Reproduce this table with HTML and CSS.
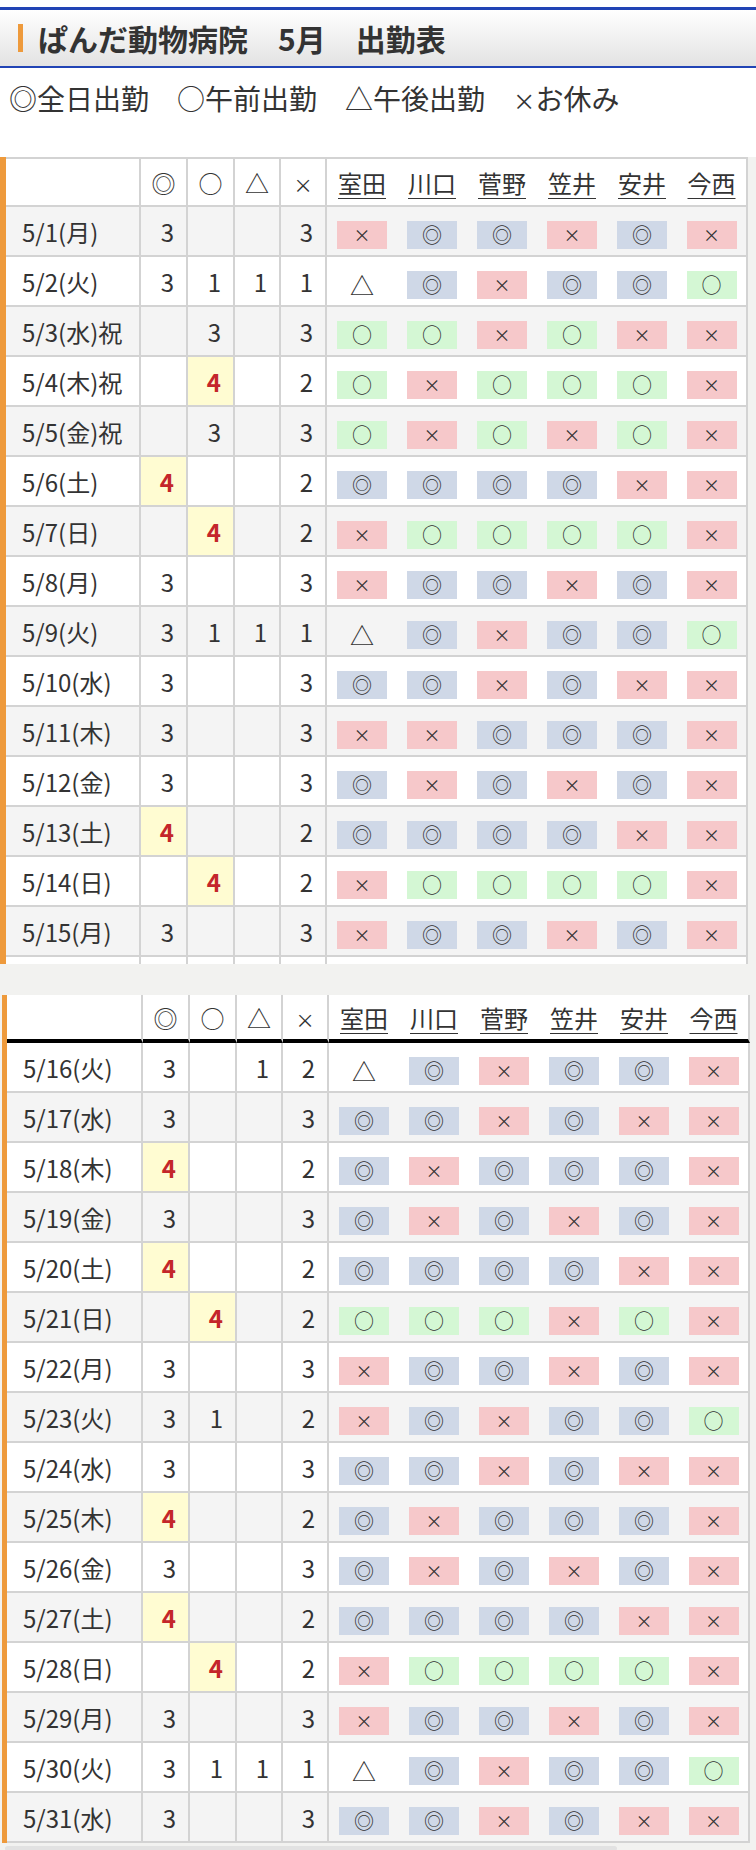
FILE: index.html
```html
<!DOCTYPE html>
<html lang="ja">
<head>
    <meta charset="UTF-8">
    <meta name="viewport" content="width=device-width, initial-scale=1.0">
    <title>ぱんだ動物病院 5月 出勤表</title>
    <link rel="stylesheet" href="styles.css">
</head>
<body>
    <div class="top">
        <div class="title-bar">
            <span class="title-mark"></span>
            <h1>ぱんだ動物病院　5月　出勤表</h1>
        </div>
        <p class="legend">◎全日出勤　○午前出勤　△午後出勤　<span class="small-x">×</span>お休み</p>
    </div>

    <!-- 前半 -->
    <div class="sheet">
        <table class="grid">
            <colgroup>
                <col class="c-date"><col class="c-num"><col class="c-num"><col class="c-num2"><col class="c-num2">
                <col class="c-name"><col class="c-name"><col class="c-name"><col class="c-name"><col class="c-name"><col class="c-last">
            </colgroup>
            <thead>
                <tr>
                    <th class="d"></th><th class="n">◎</th><th class="n">○</th><th class="n">△</th><th class="n"><span class="small-x">×</span></th>
                    <th><span class="who">室田</span></th><th><span class="who">川口</span></th><th><span class="who">菅野</span></th>
                    <th><span class="who">笠井</span></th><th><span class="who">安井</span></th><th><span class="who">今西</span></th>
                </tr>
            </thead>
            <tbody>
                <tr class="odd"><td class="d">5/1(月)</td><td class="n">3</td><td class="n"></td><td class="n"></td><td class="n">3</td>
                    <td><span class="mk x">×</span></td><td><span class="mk w">◎</span></td><td><span class="mk w">◎</span></td><td><span class="mk x">×</span></td><td><span class="mk w">◎</span></td><td><span class="mk x">×</span></td></tr>
                <tr><td class="d">5/2(火)</td><td class="n">3</td><td class="n">1</td><td class="n">1</td><td class="n">1</td>
                    <td><span class="mk p">△</span></td><td><span class="mk w">◎</span></td><td><span class="mk x">×</span></td><td><span class="mk w">◎</span></td><td><span class="mk w">◎</span></td><td><span class="mk a">○</span></td></tr>
                <tr class="odd"><td class="d">5/3(水)祝</td><td class="n"></td><td class="n">3</td><td class="n"></td><td class="n">3</td>
                    <td><span class="mk a">○</span></td><td><span class="mk a">○</span></td><td><span class="mk x">×</span></td><td><span class="mk a">○</span></td><td><span class="mk x">×</span></td><td><span class="mk x">×</span></td></tr>
                <tr><td class="d">5/4(木)祝</td><td class="n"></td><td class="n hi">4</td><td class="n"></td><td class="n">2</td>
                    <td><span class="mk a">○</span></td><td><span class="mk x">×</span></td><td><span class="mk a">○</span></td><td><span class="mk a">○</span></td><td><span class="mk a">○</span></td><td><span class="mk x">×</span></td></tr>
                <tr class="odd"><td class="d">5/5(金)祝</td><td class="n"></td><td class="n">3</td><td class="n"></td><td class="n">3</td>
                    <td><span class="mk a">○</span></td><td><span class="mk x">×</span></td><td><span class="mk a">○</span></td><td><span class="mk x">×</span></td><td><span class="mk a">○</span></td><td><span class="mk x">×</span></td></tr>
                <tr><td class="d">5/6(土)</td><td class="n hi">4</td><td class="n"></td><td class="n"></td><td class="n">2</td>
                    <td><span class="mk w">◎</span></td><td><span class="mk w">◎</span></td><td><span class="mk w">◎</span></td><td><span class="mk w">◎</span></td><td><span class="mk x">×</span></td><td><span class="mk x">×</span></td></tr>
                <tr class="odd"><td class="d">5/7(日)</td><td class="n"></td><td class="n hi">4</td><td class="n"></td><td class="n">2</td>
                    <td><span class="mk x">×</span></td><td><span class="mk a">○</span></td><td><span class="mk a">○</span></td><td><span class="mk a">○</span></td><td><span class="mk a">○</span></td><td><span class="mk x">×</span></td></tr>
                <tr><td class="d">5/8(月)</td><td class="n">3</td><td class="n"></td><td class="n"></td><td class="n">3</td>
                    <td><span class="mk x">×</span></td><td><span class="mk w">◎</span></td><td><span class="mk w">◎</span></td><td><span class="mk x">×</span></td><td><span class="mk w">◎</span></td><td><span class="mk x">×</span></td></tr>
                <tr class="odd"><td class="d">5/9(火)</td><td class="n">3</td><td class="n">1</td><td class="n">1</td><td class="n">1</td>
                    <td><span class="mk p">△</span></td><td><span class="mk w">◎</span></td><td><span class="mk x">×</span></td><td><span class="mk w">◎</span></td><td><span class="mk w">◎</span></td><td><span class="mk a">○</span></td></tr>
                <tr><td class="d">5/10(水)</td><td class="n">3</td><td class="n"></td><td class="n"></td><td class="n">3</td>
                    <td><span class="mk w">◎</span></td><td><span class="mk w">◎</span></td><td><span class="mk x">×</span></td><td><span class="mk w">◎</span></td><td><span class="mk x">×</span></td><td><span class="mk x">×</span></td></tr>
                <tr class="odd"><td class="d">5/11(木)</td><td class="n">3</td><td class="n"></td><td class="n"></td><td class="n">3</td>
                    <td><span class="mk x">×</span></td><td><span class="mk x">×</span></td><td><span class="mk w">◎</span></td><td><span class="mk w">◎</span></td><td><span class="mk w">◎</span></td><td><span class="mk x">×</span></td></tr>
                <tr><td class="d">5/12(金)</td><td class="n">3</td><td class="n"></td><td class="n"></td><td class="n">3</td>
                    <td><span class="mk w">◎</span></td><td><span class="mk x">×</span></td><td><span class="mk w">◎</span></td><td><span class="mk x">×</span></td><td><span class="mk w">◎</span></td><td><span class="mk x">×</span></td></tr>
                <tr class="odd"><td class="d">5/13(土)</td><td class="n hi">4</td><td class="n"></td><td class="n"></td><td class="n">2</td>
                    <td><span class="mk w">◎</span></td><td><span class="mk w">◎</span></td><td><span class="mk w">◎</span></td><td><span class="mk w">◎</span></td><td><span class="mk x">×</span></td><td><span class="mk x">×</span></td></tr>
                <tr><td class="d">5/14(日)</td><td class="n"></td><td class="n hi">4</td><td class="n"></td><td class="n">2</td>
                    <td><span class="mk x">×</span></td><td><span class="mk a">○</span></td><td><span class="mk a">○</span></td><td><span class="mk a">○</span></td><td><span class="mk a">○</span></td><td><span class="mk x">×</span></td></tr>
                <tr class="odd"><td class="d">5/15(月)</td><td class="n">3</td><td class="n"></td><td class="n"></td><td class="n">3</td>
                    <td><span class="mk x">×</span></td><td><span class="mk w">◎</span></td><td><span class="mk w">◎</span></td><td><span class="mk x">×</span></td><td><span class="mk w">◎</span></td><td><span class="mk x">×</span></td></tr>
                <!-- スクロールで切れている行 -->
                <tr><td class="d"></td><td class="n"></td><td class="n"></td><td class="n"></td><td class="n"></td>
                    <td></td><td></td><td></td><td></td><td></td><td></td></tr>
            </tbody>
        </table>
    </div>

    <!-- 後半（見出し固定） -->
    <div class="sheet second">
        <table class="grid">
            <colgroup>
                <col class="c-date2"><col class="c-num"><col class="c-num"><col class="c-num2"><col class="c-num2">
                <col class="c-name"><col class="c-name"><col class="c-name"><col class="c-name"><col class="c-name"><col class="c-last">
            </colgroup>
            <thead>
                <tr>
                    <th class="d"></th><th class="n">◎</th><th class="n">○</th><th class="n">△</th><th class="n"><span class="small-x">×</span></th>
                    <th><span class="who">室田</span></th><th><span class="who">川口</span></th><th><span class="who">菅野</span></th>
                    <th><span class="who">笠井</span></th><th><span class="who">安井</span></th><th><span class="who">今西</span></th>
                </tr>
            </thead>
            <tbody>
                <tr><td class="d">5/16(火)</td><td class="n">3</td><td class="n"></td><td class="n">1</td><td class="n">2</td>
                    <td><span class="mk p">△</span></td><td><span class="mk w">◎</span></td><td><span class="mk x">×</span></td><td><span class="mk w">◎</span></td><td><span class="mk w">◎</span></td><td><span class="mk x">×</span></td></tr>
                <tr class="odd"><td class="d">5/17(水)</td><td class="n">3</td><td class="n"></td><td class="n"></td><td class="n">3</td>
                    <td><span class="mk w">◎</span></td><td><span class="mk w">◎</span></td><td><span class="mk x">×</span></td><td><span class="mk w">◎</span></td><td><span class="mk x">×</span></td><td><span class="mk x">×</span></td></tr>
                <tr><td class="d">5/18(木)</td><td class="n hi">4</td><td class="n"></td><td class="n"></td><td class="n">2</td>
                    <td><span class="mk w">◎</span></td><td><span class="mk x">×</span></td><td><span class="mk w">◎</span></td><td><span class="mk w">◎</span></td><td><span class="mk w">◎</span></td><td><span class="mk x">×</span></td></tr>
                <tr class="odd"><td class="d">5/19(金)</td><td class="n">3</td><td class="n"></td><td class="n"></td><td class="n">3</td>
                    <td><span class="mk w">◎</span></td><td><span class="mk x">×</span></td><td><span class="mk w">◎</span></td><td><span class="mk x">×</span></td><td><span class="mk w">◎</span></td><td><span class="mk x">×</span></td></tr>
                <tr><td class="d">5/20(土)</td><td class="n hi">4</td><td class="n"></td><td class="n"></td><td class="n">2</td>
                    <td><span class="mk w">◎</span></td><td><span class="mk w">◎</span></td><td><span class="mk w">◎</span></td><td><span class="mk w">◎</span></td><td><span class="mk x">×</span></td><td><span class="mk x">×</span></td></tr>
                <tr class="odd"><td class="d">5/21(日)</td><td class="n"></td><td class="n hi">4</td><td class="n"></td><td class="n">2</td>
                    <td><span class="mk a">○</span></td><td><span class="mk a">○</span></td><td><span class="mk a">○</span></td><td><span class="mk x">×</span></td><td><span class="mk a">○</span></td><td><span class="mk x">×</span></td></tr>
                <tr><td class="d">5/22(月)</td><td class="n">3</td><td class="n"></td><td class="n"></td><td class="n">3</td>
                    <td><span class="mk x">×</span></td><td><span class="mk w">◎</span></td><td><span class="mk w">◎</span></td><td><span class="mk x">×</span></td><td><span class="mk w">◎</span></td><td><span class="mk x">×</span></td></tr>
                <tr class="odd"><td class="d">5/23(火)</td><td class="n">3</td><td class="n">1</td><td class="n"></td><td class="n">2</td>
                    <td><span class="mk x">×</span></td><td><span class="mk w">◎</span></td><td><span class="mk x">×</span></td><td><span class="mk w">◎</span></td><td><span class="mk w">◎</span></td><td><span class="mk a">○</span></td></tr>
                <tr><td class="d">5/24(水)</td><td class="n">3</td><td class="n"></td><td class="n"></td><td class="n">3</td>
                    <td><span class="mk w">◎</span></td><td><span class="mk w">◎</span></td><td><span class="mk x">×</span></td><td><span class="mk w">◎</span></td><td><span class="mk x">×</span></td><td><span class="mk x">×</span></td></tr>
                <tr class="odd"><td class="d">5/25(木)</td><td class="n hi">4</td><td class="n"></td><td class="n"></td><td class="n">2</td>
                    <td><span class="mk w">◎</span></td><td><span class="mk x">×</span></td><td><span class="mk w">◎</span></td><td><span class="mk w">◎</span></td><td><span class="mk w">◎</span></td><td><span class="mk x">×</span></td></tr>
                <tr><td class="d">5/26(金)</td><td class="n">3</td><td class="n"></td><td class="n"></td><td class="n">3</td>
                    <td><span class="mk w">◎</span></td><td><span class="mk x">×</span></td><td><span class="mk w">◎</span></td><td><span class="mk x">×</span></td><td><span class="mk w">◎</span></td><td><span class="mk x">×</span></td></tr>
                <tr class="odd"><td class="d">5/27(土)</td><td class="n hi">4</td><td class="n"></td><td class="n"></td><td class="n">2</td>
                    <td><span class="mk w">◎</span></td><td><span class="mk w">◎</span></td><td><span class="mk w">◎</span></td><td><span class="mk w">◎</span></td><td><span class="mk x">×</span></td><td><span class="mk x">×</span></td></tr>
                <tr><td class="d">5/28(日)</td><td class="n"></td><td class="n hi">4</td><td class="n"></td><td class="n">2</td>
                    <td><span class="mk x">×</span></td><td><span class="mk a">○</span></td><td><span class="mk a">○</span></td><td><span class="mk a">○</span></td><td><span class="mk a">○</span></td><td><span class="mk x">×</span></td></tr>
                <tr class="odd"><td class="d">5/29(月)</td><td class="n">3</td><td class="n"></td><td class="n"></td><td class="n">3</td>
                    <td><span class="mk x">×</span></td><td><span class="mk w">◎</span></td><td><span class="mk w">◎</span></td><td><span class="mk x">×</span></td><td><span class="mk w">◎</span></td><td><span class="mk x">×</span></td></tr>
                <tr><td class="d">5/30(火)</td><td class="n">3</td><td class="n">1</td><td class="n">1</td><td class="n">1</td>
                    <td><span class="mk p">△</span></td><td><span class="mk w">◎</span></td><td><span class="mk x">×</span></td><td><span class="mk w">◎</span></td><td><span class="mk w">◎</span></td><td><span class="mk a">○</span></td></tr>
                <tr class="odd"><td class="d">5/31(水)</td><td class="n">3</td><td class="n"></td><td class="n"></td><td class="n">3</td>
                    <td><span class="mk w">◎</span></td><td><span class="mk w">◎</span></td><td><span class="mk x">×</span></td><td><span class="mk w">◎</span></td><td><span class="mk x">×</span></td><td><span class="mk x">×</span></td></tr>
            </tbody>
        </table>
    </div>
    <div class="scroll-thumb"></div>
</body>
</html>
```

FILE: styles.css
```css
* {
    box-sizing: border-box;
}
body {
    margin: 0;
    background-color: #f2f2f0;
    color: #333;
    font-family: "Noto Sans CJK JP", "Noto Sans", sans-serif;
}
.top {
    background: #fff;
    padding-top: 7px;
    padding-bottom: 37px;
}
.title-bar {
    display: flex;
    align-items: center;
    height: 61px;
    padding-left: 18px;
    border-top: 3px solid #2144b5;
    border-bottom: 2px solid #2144b5;
    background: linear-gradient(#fff, #e3e3e3);
}
.title-mark {
    width: 5px;
    height: 28px;
    margin-right: 15px;
    background-color: #ee9a3c;
}
h1 {
    margin: 0;
    font-size: 30px;
    font-weight: bold;
    color: #333;
    line-height: 1;
}
.legend {
    margin: 10px 0 0;
    padding-left: 9px;
    font-size: 28px;
    line-height: 40px;
}
.small-x {
    font-size: 0.8em;
}

/* 表 */
.sheet {
    width: 748px;
    height: 807px;
    overflow: hidden;
    background: #fff;
    border-left: 6px solid #ee9a3c;
}
.sheet.second {
    width: 748px;
    height: auto;
    margin: 31px 0 0 2px;
    border-left-width: 5px;
}
.grid {
    width: 742px;
    border-collapse: separate;
    border-spacing: 0;
    table-layout: fixed;
    font-size: 24px;
}
.second .grid {
    width: 743px;
}
.c-date { width: 135px; }
.c-date2 { width: 136px; }
.c-num { width: 47px; }
.c-num2 { width: 46px; }
.c-name { width: 70px; }
.c-last { width: 71px; }

.grid th,
.grid td {
    height: 50px;
    padding: 0;
    text-align: center;
    font-weight: normal;
    border-bottom: 2px solid #d3d3d3;
}
.grid thead th {
    border-top: 2px solid #d3d3d3;
}
.grid .d,
.grid .n,
.grid th:last-child,
.grid td:last-child {
    border-right: 2px solid #d3d3d3;
}
.second .grid thead th {
    height: 48px;
    border-top: none;
    border-bottom: 4px solid #000;
}
.grid td.d {
    text-align: left;
    padding-left: 16px;
    white-space: nowrap;
}
.grid td.n {
    text-align: right;
    padding-right: 12px;
}
.grid tr.odd td {
    background-color: #f4f4f4;
}
.grid td.hi,
.grid tr.odd td.hi {
    background-color: #fffcd2;
    color: #c4262a;
    font-weight: bold;
}
.who {
    text-decoration: underline;
    text-underline-offset: 5px;
    text-decoration-thickness: 1px;
}
.mk {
    display: inline-block;
    width: 50px;
    height: 28px;
    line-height: 28px;
    font-size: 20px;
    vertical-align: middle;
    color: #333;
}
.mk.w { background-color: #cfd8e7; }
.mk.x { background-color: #f6c8ca; font-size: 17px; }
.mk.a { background-color: #d4f7d4; }
.mk.p {
    background: none;
    font-size: 24px;
}
.scroll-thumb {
    width: 612px;
    height: 5px;
    margin: 3px 0 0 5px;
    border-radius: 3px;
    background-color: #e2e2e2;
}
```
